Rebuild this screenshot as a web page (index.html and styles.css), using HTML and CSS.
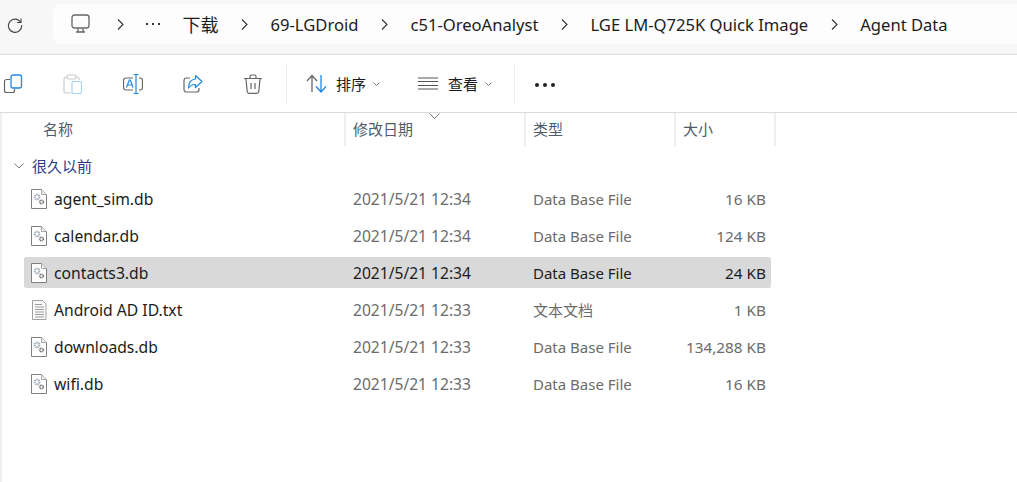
FILE: index.html
```html
<!DOCTYPE html>
<html lang="en">
<head>
  <meta charset="UTF-8">
  <title>Agent Data</title>
  <link rel="stylesheet" href="styles.css">
</head>
<body>
  <div class="topbar">
    <div class="refresh">
      <svg width="16" height="16" viewBox="0 0 16 16" fill="none" stroke="#444" stroke-width="1.1"><path d="M13.6 5.2A6.6 6.6 0 1 0 14.6 8"/><path d="M14 1.5v4h-4"/></svg>
    </div>
    <div class="crumbs">
      <svg class="monitor" width="20" height="20" viewBox="0 0 20 20" fill="none" stroke="#666" stroke-width="1.3"><rect x="1" y="1" width="17" height="13" rx="2.5"/><path d="M7 14.5v3M12 14.5v3M5 18h9"/></svg>
      <svg class="chev" width="7" height="11" viewBox="0 0 7 11" fill="none" stroke="#333" stroke-width="1.1"><path d="M1 .5l5 5-5 5"/></svg>
      <span class="more"><i></i><i></i><i></i></span>
      <span class="cjk">下载</span>
      <svg class="chev" width="7" height="11" viewBox="0 0 7 11" fill="none" stroke="#333" stroke-width="1.1"><path d="M1 .5l5 5-5 5"/></svg>
      <span>69-LGDroid</span>
      <svg class="chev" width="7" height="11" viewBox="0 0 7 11" fill="none" stroke="#333" stroke-width="1.1"><path d="M1 .5l5 5-5 5"/></svg>
      <span>c51-OreoAnalyst</span>
      <svg class="chev" width="7" height="11" viewBox="0 0 7 11" fill="none" stroke="#333" stroke-width="1.1"><path d="M1 .5l5 5-5 5"/></svg>
      <span>LGE LM-Q725K Quick Image</span>
      <svg class="chev" width="7" height="11" viewBox="0 0 7 11" fill="none" stroke="#333" stroke-width="1.1"><path d="M1 .5l5 5-5 5"/></svg>
      <span>Agent Data</span>
    </div>
  </div>

  <div class="toolbar">
    <div class="tool-icons">
      <svg width="20" height="20" viewBox="0 0 20 20" fill="none"><path d="M7 5.500H3.500A2 2 0 0 0 1.500 7.500v9a2 2 0 0 0 2 2h6a2 2 0 0 0 2-2V15" stroke="#666" stroke-width="1.2"/><rect x="8" y="1" width="10.500" height="13" rx="2" stroke="#1e88e5" stroke-width="1.300"/></svg>
      <svg width="20" height="20" viewBox="0 0 20 20" fill="none"><path d="M4 3H3a2 2 0 0 0-2 2v12a2 2 0 0 0 2 2h5M13 3h1a2 2 0 0 1 2 2v1" stroke="#ccc" stroke-width="1.200"/><rect x="4" y="1" width="9" height="4" rx="1.500" stroke="#ccc" stroke-width="1.200"/><rect x="9" y="7.500" width="9.500" height="12" rx="1.500" stroke="#a9d3f5" stroke-width="1.200"/></svg>
      <svg width="20" height="20" viewBox="0 0 20 20" fill="none"><path d="M10 4H3a2.500 2.500 0 0 0-2.500 2.500v7A2.500 2.500 0 0 0 3 16h7M16 4h1a2.500 2.500 0 0 1 2.500 2.500v7A2.500 2.500 0 0 1 17 16h-1" stroke="#666" stroke-width="1.200"/><path d="M10.500.5h5M13 .5v19M10.500 19.500h5M3.500 13.500 6.300 6h1l2.700 7.500M4.500 11h4.500" stroke="#1e88e5" stroke-width="1.200"/></svg>
      <svg width="20" height="20" viewBox="0 0 20 20" fill="none"><path d="M7 4H3.500a2.500 2.500 0 0 0-2.500 2.500v9A2.500 2.500 0 0 0 3.500 18h10a2.500 2.500 0 0 0 2.500-2.500V14" stroke="#666" stroke-width="1.200"/><path d="M12.500 1.500 19 7.500l-6.500 6V10.500c-3 0-5.500 1-7 3.500 0-5 2.500-8.500 7-9z" stroke="#1e88e5" stroke-width="1.200" stroke-linejoin="round"/></svg>
      <svg width="20" height="20" viewBox="0 0 20 20" fill="none" stroke="#666" stroke-width="1.200"><path d="M1 4.500h18M7 4V2.500A1.500 1.500 0 0 1 8.500 1h3A1.500 1.500 0 0 1 13 2.500V4"/><path d="M3 5l1.200 12.500a2 2 0 0 0 2 1.800h7.600a2 2 0 0 0 2-1.800L17 5"/><path d="M8 9v6M12 9v6"/></svg>
    </div>
    <div class="tool-sep"></div>
    <div class="tool-btn sort">
      <svg width="21" height="19" viewBox="0 0 21 19" fill="none" stroke-width="1.300"><path d="M6 18V2M1 7l5-5.500L11 7" stroke="#666"/><path d="M15 1v16.500M10 12.500l5 5.500 5-5.500" stroke="#1e88e5"/></svg>
      <span>排序</span>
      <svg class="caret" width="7" height="4" viewBox="0 0 7 4" fill="none" stroke="#777"><path d="M.5.5l3 3 3-3"/></svg>
    </div>
    <div class="tool-btn view">
      <svg width="20" height="13" viewBox="0 0 20 13" fill="none" stroke="#555"><path d="M0 1h20M0 4.500h20M0 8.500h20M0 12h20"/></svg>
      <span>查看</span>
      <svg class="caret" width="7" height="4" viewBox="0 0 7 4" fill="none" stroke="#777"><path d="M.5.5l3 3 3-3"/></svg>
    </div>
    <div class="tool-sep"></div>
    <div class="tool-more"><i></i><i></i><i></i></div>
  </div>

  <div class="list">
    <div class="head">
      <div class="col name">名称</div>
      <div class="col date">修改日期
        <svg class="sort-mark" width="11" height="6" viewBox="0 0 11 6" fill="none" stroke="#777"><path d="M.5.5l5 5 5-5"/></svg>
      </div>
      <div class="col type">类型</div>
      <div class="col size">大小</div>
    </div>

    <div class="group">
      <svg width="10" height="6" viewBox="0 0 10 6" fill="none" stroke="#777"><path d="M.5.5l4.500 4.500 4.500-4.500"/></svg>
      <span>很久以前</span>
    </div>

    <div class="row">
      <div class="cell-name"><svg class="file" viewBox="0 0 16 20"><use href="#db"/></svg>agent_sim.db</div>
      <div class="cell-date">2021/5/21 12:34</div>
      <div class="cell-type">Data Base File</div>
      <div class="cell-size">16 KB</div>
    </div>
    <div class="row">
      <div class="cell-name"><svg class="file" viewBox="0 0 16 20"><use href="#db"/></svg>calendar.db</div>
      <div class="cell-date">2021/5/21 12:34</div>
      <div class="cell-type">Data Base File</div>
      <div class="cell-size">124 KB</div>
    </div>
    <div class="row selected">
      <div class="cell-name"><svg class="file" viewBox="0 0 16 20"><use href="#db"/></svg>contacts3.db</div>
      <div class="cell-date">2021/5/21 12:34</div>
      <div class="cell-type">Data Base File</div>
      <div class="cell-size">24 KB</div>
    </div>
    <div class="row">
      <div class="cell-name"><svg class="file" viewBox="0 0 16 20"><use href="#txt"/></svg>Android AD ID.txt</div>
      <div class="cell-date">2021/5/21 12:33</div>
      <div class="cell-type">文本文档</div>
      <div class="cell-size">1 KB</div>
    </div>
    <div class="row">
      <div class="cell-name"><svg class="file" viewBox="0 0 16 20"><use href="#db"/></svg>downloads.db</div>
      <div class="cell-date">2021/5/21 12:33</div>
      <div class="cell-type">Data Base File</div>
      <div class="cell-size">134,288 KB</div>
    </div>
    <div class="row">
      <div class="cell-name"><svg class="file" viewBox="0 0 16 20"><use href="#db"/></svg>wifi.db</div>
      <div class="cell-date">2021/5/21 12:33</div>
      <div class="cell-type">Data Base File</div>
      <div class="cell-size">16 KB</div>
    </div>
  </div>

  <svg class="defs" width="0" height="0">
    <defs>
      <g id="db">
        <path d="M.5.500h10l5 5v14H.5z" fill="#fff" stroke="#808080"/>
        <path d="M10.500.500v5h5" fill="#eee" stroke="#aaa"/>
        <circle cx="6" cy="8" r="2.400" fill="none" stroke="#a4b0c0" stroke-width="2" stroke-dasharray="1.300 .6"/>
        <circle cx="10.500" cy="13" r="1.800" fill="none" stroke="#707070" stroke-width="1.600" stroke-dasharray="1 .5"/>
      </g>
      <g id="txt">
        <path d="M1.500.500h10l3.500 3.500v15.500H1.500z" fill="#fbfbfb" stroke="#a0a0a0"/>
        <path d="M4 4.500h7M4 7h9M4 9.500h9M4 12h9M4 14.500h9M4 17h9" stroke="#999"/>
      </g>
    </defs>
  </svg>
</body>
</html>
```
FILE: styles.css
```css
* {
  margin:0;
  padding:0;
  box-sizing:border-box;
}

html, body {
  height:100%;
}

body {
  overflow:hidden;
  background:#fff;
  font-family:"Noto Sans", "Noto Sans CJK SC", sans-serif;
  font-size:15px;
}

.topbar {
  height:55px;
  display:flex;
  align-items:flex-start;
  padding-top:4px;
  background:#f7f7f7;
  border-bottom:1px solid #dcdcdc;
}

.refresh {
  width:53px;
  height:40px;
  padding:2px 0 0 7px;
  display:flex;
  align-items:center;
}

.crumbs {
  flex:1;
  height:40px;
  padding-left:18px;
  display:flex;
  align-items:center;
  gap:22.500px;
  background:#fdfdfd;
  border-radius:8px 0 0 8px;
  color:#1c1c1c;
  font-size:16.600px;
  white-space:nowrap;
}

.cjk {
  font-size:18px;
}

.monitor {
  margin-right:3px;
}

.more {
  width:14px;
  display:flex;
  justify-content:space-between;
}

.more i {
  width:2px;
  height:2px;
  background:#333;
}

.toolbar {
  height:58px;
  display:flex;
  align-items:center;
  border-bottom:1px solid #dcdcdc;
}

.tool-icons {
  width:286px;
  padding-left:3px;
  display:flex;
  gap:40px;
}

.tool-sep {
  width:1px;
  height:40px;
  background:#ececec;
}

.tool-btn {
  display:flex;
  align-items:center;
  color:#1c1c1c;
}

.tool-btn span {
  margin:0 7px 0 9px;
}

.sort {
  margin-left:19px;
  width:112px;
}

.view {
  width:96px;
}

.view span {
  margin-left:10px;
}

.tool-more {
  margin:2px 0 0 20px;
  display:flex;
  gap:4px;
}

.tool-more i {
  width:4px;
  height:4px;
  border-radius:50%;
  background:#222;
}

.list {
  padding-left:24px;
  height:369px;
  border-left:2px solid #efefef;
}

.head {
  height:33px;
  display:flex;
  margin-left:-2px;
  color:#4f5b6b;
  line-height:33px;
}

.col {
  position:relative;
  padding-left:7px;
  border-right:2px solid #eee;
}

.name {
  width:322px;
  padding-left:19px;
}

.date {
  width:180px;
}

.type {
  width:150px;
}

.size {
  width:100px;
}

.sort-mark {
  position:absolute;
  left:83px;
  top:0;
}

.group {
  height:31px;
  margin:4px 0 2px -12px;
  display:flex;
  align-items:center;
  gap:8px;
  color:#2e3a8c;
}

.row {
  width:747px;
  height:31px;
  margin:0 0 6px -2px;
  display:flex;
  align-items:center;
  border-radius:2px;
  color:#6b6b6b;
}

.row.selected {
  background:#d9d9d9;
  color:#1c1c1c;
}

.cell-name {
  width:329px;
  padding-left:7px;
  display:flex;
  align-items:center;
  gap:7px;
  color:#1c1c1c;
  font-size:15.700px;
}

.file {
  width:16px;
  height:20px;
}

.cell-date {
  width:180px;
  font-size:15.600px;
}

.cell-type {
  width:150px;
  font-size:15px;
}

.cell-size {
  width:83px;
  text-align:right;
  font-size:15.300px;
}

.defs {
  position:absolute;
}
```
